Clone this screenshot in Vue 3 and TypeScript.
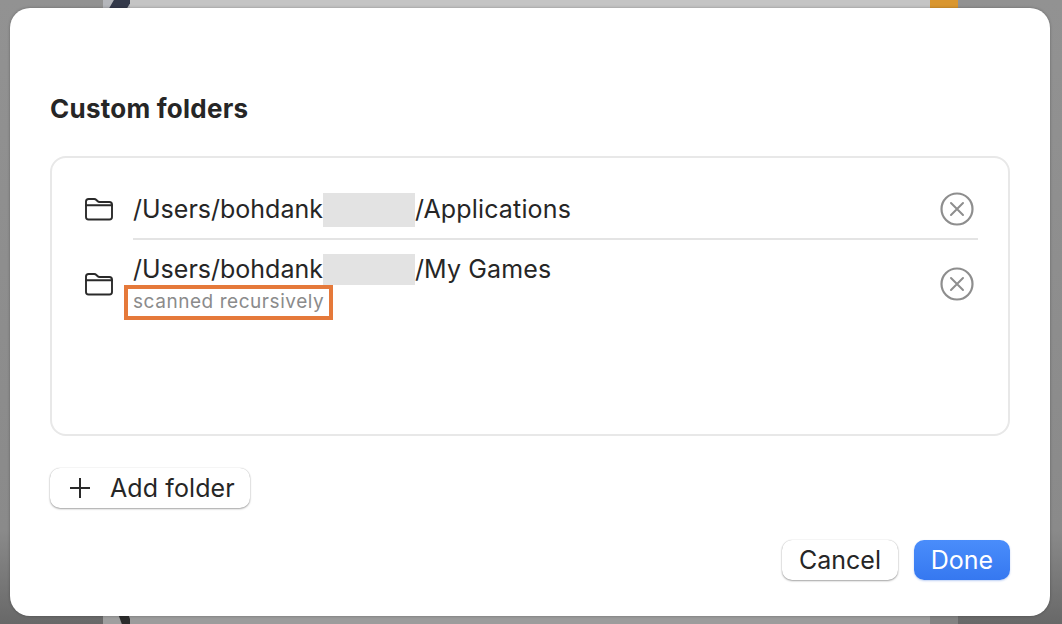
<script setup lang="ts">
interface Folder { id: number; before: string; after: string; note?: string }
const folders: Folder[] = [
  { id: 1, before: '/Users/bohdank', after: '/Applications' },
  { id: 2, before: '/Users/bohdank', after: '/My Games', note: 'scanned recursively' },
]
</script>

<template>
  <div class="screen">
    <div class="backdrop">
      <div class="strip side"></div>
      <div class="strip edge"><i></i><b></b></div>
      <div class="strip main"></div>
      <div class="strip accent"></div>
      <div class="strip side"></div>
    </div>
    <section class="modal">
      <h2 class="title">Custom folders</h2>
      <div class="card">
        <div v-for="f in folders" :key="f.id" class="row" :class="{ noted: f.note }">
          <svg class="folder" width="30" height="24" viewBox="0 0 30 24" fill="none" stroke="#2a2a2a" stroke-width="1.9" stroke-linejoin="round" stroke-linecap="round">
            <path d="M2 6V4.600C2 2.900 3 2 4.600 2h5.600c1 0 1.500.3 2.200 1l1 1c.7.7 1.200 1 2.200 1h9.800C27 5 28 6 28 7.700V20c0 1.700-1 2.500-2.600 2.500H4.600C3 22.500 2 21.700 2 20V6z" />
            <path d="M2 8.200h26" />
          </svg>
          <div class="body" :class="{ divided: !f.note }">
            <div class="path"><span>{{ f.before }}</span><span class="blur"></span><span class="tail">{{ f.after }}</span></div>
            <div v-if="f.note" class="note">{{ f.note }}</div>
          </div>
          <svg class="remove" width="34" height="34" viewBox="0 0 34 34" fill="none" stroke="#8e8e8e">
            <circle cx="17" cy="17" r="15.500" stroke-width="2.200" />
            <path d="M11 11l12 12M23 11L11 23" stroke-width="2" stroke-linecap="round" />
          </svg>
        </div>
      </div>
      <button class="btn add">
        <svg width="22" height="22" viewBox="0 0 22 22" stroke="#2a2a2a" stroke-width="2"><path d="M11 1v20M1 11h20" /></svg>
        <span>Add folder</span>
      </button>
      <div class="actions">
        <button class="btn cancel">Cancel</button>
        <button class="btn done">Done</button>
      </div>
    </section>
  </div>
</template>

<style>
html, body { margin: 0; padding: 0; background: #8c8c8c; }
</style>

<style scoped>
.screen { position: relative; width: 1062px; height: 624px; overflow: hidden; font-family: Inter, "Liberation Sans", sans-serif; color: #262626; }
.backdrop { position: absolute; inset: 0; display: grid; grid-template-columns: 103px 27px 800px 28px 1fr; }
.strip { height: 100%; }
.side { background: linear-gradient(#929292 0, #8a8a8a 85%, #686868 100%); }
.edge { background: linear-gradient(#b4b6bb 0 16px, #9f9f9f 16px); position: relative; overflow: hidden; }
.edge i { position: absolute; left: 8px; top: -4px; width: 18px; height: 18px; background: #33394a; transform: skewX(-30deg); }
.edge b { position: absolute; left: 17px; bottom: 0; width: 10px; height: 10px; background: #2c2c2c; transform: skewX(20deg); }
.main { background: linear-gradient(#c4c4c4 0 16px, #9c9c9c 16px); }
.accent { background: linear-gradient(#d9962f 0 16px, #828282 16px); }
.modal { position: absolute; left: 10px; top: 8px; width: 1040px; height: 608px; box-sizing: border-box; padding: 84px 40px 0; background: #fff; border-radius: 20px; box-shadow: 0 0 3px rgba(0,0,0,.3); display: flex; flex-direction: column; }
.title { margin: 0; font-size: 26px; line-height: 34px; font-weight: 700; letter-spacing: .25px; color: #262626; }
.card { margin-top: 30px; width: 960px; height: 280px; box-sizing: border-box; border: 2px solid #e8e8e8; border-radius: 16px; padding: 17px 30px 0 33px; }
.row { display: flex; align-items: center; height: 65px; }
.row.noted { height: 88px; }
.folder { flex: none; width: 30px; height: 24px; margin: 2px 19px 0 -1px; }
.noted .folder { margin-top: 0; }
.body { flex: 1; height: 100%; box-sizing: border-box; display: flex; flex-direction: column; padding-top: 18px; }
.body.divided { border-bottom: 2px solid #e4e4e4; }
.noted .body { padding-top: 14px; }
.path { display: flex; font-size: 25px; line-height: 33px; height: 34px; align-items: flex-start; }
.tail { letter-spacing: .15px; }
.blur { width: 92px; height: 34px; background: #e3e3e3; }
.noted .path { height: 31px; line-height: 31px; }
.noted .blur { height: 31px; }
.note { align-self: flex-start; box-sizing: border-box; margin: 0 0 0 -9px; padding: 0 5px; border: 4px solid #e5793a; font-size: 19px; line-height: 25px; height: 35px; letter-spacing: .55px; color: #8b8b8b; white-space: nowrap; }
.remove { flex: none; margin: 3px 4px 0 -38px; }
.noted .remove { margin-top: 0; }
.btn { font-family: inherit; font-size: 25px; border: none; border-radius: 10px; background: #fff; color: #262626; box-shadow: 0 1px 2px rgba(0,0,0,.35), 0 0 1px rgba(0,0,0,.25); padding: 0; height: 40px; line-height: 38px; }
.add { margin-top: 32px; width: 200px; display: flex; align-items: center; gap: 19px; padding-left: 19px; box-sizing: border-box; letter-spacing: .1px; }
.actions { margin-top: 32px; display: flex; justify-content: flex-end; gap: 16px; }
.cancel { width: 116px; }
.done { width: 96px; color: #fff; background: linear-gradient(#4a8dfb, #3678f0); box-shadow: 0 1px 2px rgba(40,100,220,.3); }
</style>
